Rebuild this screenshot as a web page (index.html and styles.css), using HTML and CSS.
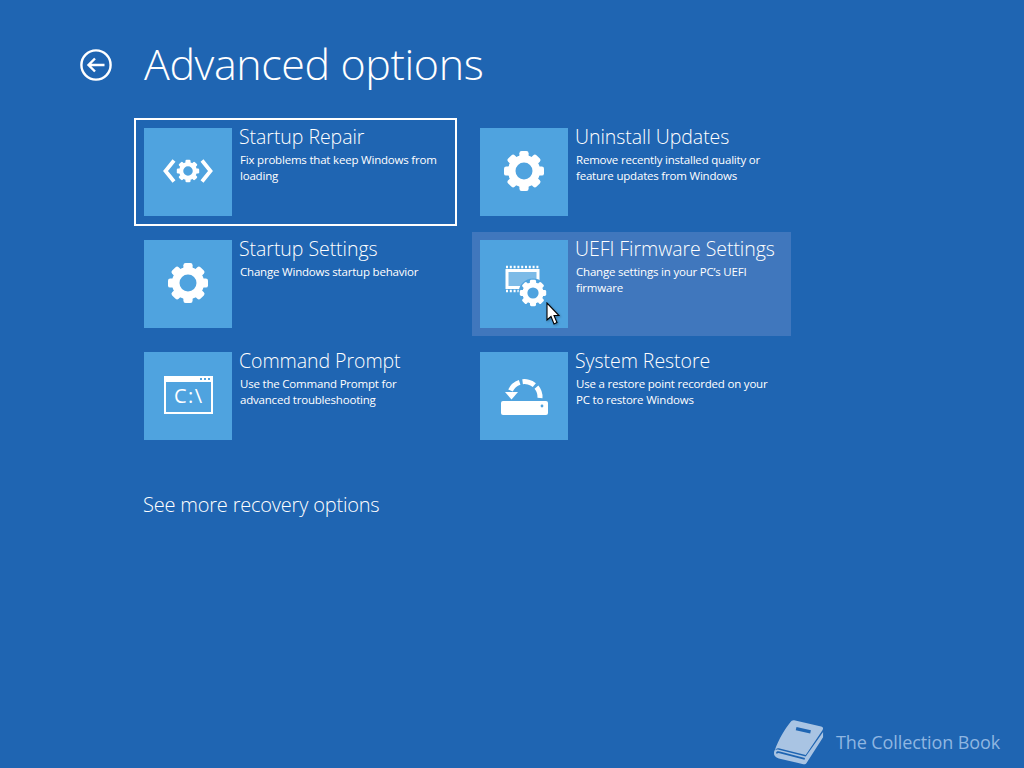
FILE: index.html
```html
<!DOCTYPE html>
<html lang="en">
<head>
<meta charset="utf-8">
<title>Advanced options</title>
<link rel="stylesheet" href="styles.css">
</head>
<body>
<svg class="defs" width="0" height="0" aria-hidden="true">
  <defs>
    <g id="gear">
      <circle r="12.300" fill="none" stroke="#fff" stroke-width="7.600"/>
      <g fill="#fff">
        <rect x="-4.600" y="-20" width="9.200" height="7" rx="2.200"/>
        <rect x="-4.600" y="-20" width="9.200" height="7" rx="2.200" transform="rotate(45)"/>
        <rect x="-4.600" y="-20" width="9.200" height="7" rx="2.200" transform="rotate(90)"/>
        <rect x="-4.600" y="-20" width="9.200" height="7" rx="2.200" transform="rotate(135)"/>
        <rect x="-4.600" y="-20" width="9.200" height="7" rx="2.200" transform="rotate(180)"/>
        <rect x="-4.600" y="-20" width="9.200" height="7" rx="2.200" transform="rotate(225)"/>
        <rect x="-4.600" y="-20" width="9.200" height="7" rx="2.200" transform="rotate(270)"/>
        <rect x="-4.600" y="-20" width="9.200" height="7" rx="2.200" transform="rotate(315)"/>
      </g>
    </g>
  </defs>
</svg>

<header class="header">
  <svg class="back" width="32" height="32" viewBox="0 0 32 32">
    <circle cx="16" cy="16" r="14.600" fill="none" stroke="#fff" stroke-width="2.400"/>
    <path d="M24.500 16H8.500M15 9.500L8.500 16L15 22.500" fill="none" stroke="#fff" stroke-width="2.400"/>
  </svg>
  <h1 class="title">Advanced options</h1>
</header>

<main class="options">
  <div class="option focused">
    <div class="tile">
      <svg width="88" height="88" viewBox="0 0 88 88">
        <use href="#gear" transform="translate(44 43) scale(.56)"/>
        <path d="M30 32.500L21.500 43L30 53.500M58 32.500L66.500 43L58 53.500" fill="none" stroke="#fff" stroke-width="3.800"/>
      </svg>
    </div>
    <div class="text">
      <div class="name">Startup Repair</div>
      <div class="desc">Fix problems that keep Windows from loading</div>
    </div>
  </div>
  <div class="option">
    <div class="tile">
      <svg width="88" height="88" viewBox="0 0 88 88"><use href="#gear" transform="translate(44 43)"/></svg>
    </div>
    <div class="text">
      <div class="name">Uninstall Updates</div>
      <div class="desc">Remove recently installed quality or feature updates from Windows</div>
    </div>
  </div>
  <div class="option">
    <div class="tile">
      <svg width="88" height="88" viewBox="0 0 88 88"><use href="#gear" transform="translate(44 43)"/></svg>
    </div>
    <div class="text">
      <div class="name">Startup Settings</div>
      <div class="desc">Change Windows startup behavior</div>
    </div>
  </div>
  <div class="option hovered">
    <div class="tile">
      <svg width="88" height="88" viewBox="0 0 88 88">
        <rect x="27" y="30.500" width="31" height="17" fill="#7dbbe7" stroke="#fff" stroke-width="3"/>
        <path d="M26 27H59M26 51H59" fill="none" stroke="#fff" stroke-width="2.400" stroke-dasharray="2 1.800"/>
        <circle cx="53" cy="53" r="14.500" fill="#4fa3df"/>
        <use href="#gear" transform="translate(53 53) scale(.66)"/>
      </svg>
    </div>
    <div class="text">
      <div class="name">UEFI Firmware Settings</div>
      <div class="desc">Change settings in your PC’s UEFI firmware</div>
    </div>
  </div>
  <div class="option">
    <div class="tile">
      <svg width="88" height="88" viewBox="0 0 88 88">
        <rect x="21" y="25" width="47" height="36" fill="none" stroke="#fff" stroke-width="2"/>
        <rect x="20" y="24" width="49" height="6" fill="#fff"/>
        <path d="M56 27H66" stroke="#4fa3df" stroke-width="2" stroke-dasharray="2 2"/>
        <text class="prompt" x="30" y="51">C:\</text>
      </svg>
    </div>
    <div class="text">
      <div class="name">Command Prompt</div>
      <div class="desc">Use the Command Prompt for advanced troubleshooting</div>
    </div>
  </div>
  <div class="option">
    <div class="tile">
      <svg width="88" height="88" viewBox="0 0 88 88">
        <rect x="21" y="49" width="47" height="14" rx="2" fill="#fff"/>
        <circle cx="62" cy="54" r="1.400" fill="#4fa3df"/>
        <path d="M30.500 38.500A15.500 15.500 0 0 1 60 46" fill="none" stroke="#fff" stroke-width="5" stroke-dasharray="12.500 3"/>
        <path d="M25 40H38L31.500 47.500Z" fill="#fff"/>
      </svg>
    </div>
    <div class="text">
      <div class="name">System Restore</div>
      <div class="desc">Use a restore point recorded on your PC to restore Windows</div>
    </div>
  </div>
</main>

<div class="more">See more recovery options</div>

<svg class="cursor" width="14" height="24" viewBox="0 0 14 24">
  <path d="M1 1V18L5 14.500L8 22L11 20.500L8 13.500H13Z" fill="#fff" stroke="#000" stroke-width="1.100"/>
</svg>

<div class="watermark">
  <svg width="52" height="47" viewBox="0 0 54 48">
    <path d="M22 1L50 7.500C52 8 52.500 9.500 51.500 11L34 37L6 30C4 29.500 3 30.500 1.500 33C6 20 13 9 18 3C19 1.500 20.500 .6 22 1Z" fill="#a9c4e3"/>
    <path d="M1 35C1 31.500 3.500 31 6 31.500L34 38.500L52 13V18.500L35 45C34 46.500 33 46.800 31.500 46.500L6 40.500C2.500 39.500 1 38 1 35Z" fill="#a9c4e3"/>
    <path d="M4 35.500C4 33.800 5 33.800 7 34.200L33 41" fill="none" stroke="#1f65b2" stroke-width="1.800"/>
    <path d="M24 9.500L39 13" fill="none" stroke="#1f65b2" stroke-width="3.400"/>
  </svg>
  <span class="mark-text">The Collection Book</span>
</div>
</body>
</html>
```

FILE: styles.css
```css
* { box-sizing: border-box; }

html, body {
  margin: 0;
  height: 100%;
}

body {
  position: relative;
  width: 1024px;
  height: 768px;
  overflow: hidden;
  background: #1f65b2;
  color: #fff;
  font-family: "Open Sans", "Liberation Sans", sans-serif;
}

.defs { position: absolute; }

.header {
  display: flex;
  align-items: center;
  gap: 32px;
  height: 64px;
  margin-top: 32px;
  padding-left: 80px;
}

.back { flex: none; margin-top: 1px; }

.title {
  margin: 0;
  font-size: 43px;
  font-weight: 300;
  line-height: 64px;
  letter-spacing: -0.4px;
}

.options {
  display: grid;
  grid-template-columns: 319px 319px;
  grid-auto-rows: 104px;
  gap: 8px 17px;
  margin: 24px 0 0 136px;
}

.option {
  display: flex;
  padding: 8px;
  gap: 7px;
}

.focused { outline: 2px solid #fff; }

.hovered { background: #4077bd; }

.tile {
  flex: none;
  width: 88px;
  height: 88px;
  background: #4fa3df;
}

.tile svg { display: block; }

.text { min-width: 0; }

.name {
  font-size: 19.500px;
  font-weight: 300;
  line-height: 26px;
  letter-spacing: -0.05px;
  margin-top: -4px;
  white-space: nowrap;
}

.desc {
  width: 205px;
  margin: 2px 0 0 1px;
  font-size: 11.500px;
  line-height: 16px;
  letter-spacing: -0.2px;
}

.prompt {
  fill: #fff;
  font-family: "Open Sans", sans-serif;
  font-size: 20px;
  letter-spacing: 1.500px;
}

.more {
  margin: 44px 0 0 143px;
  font-size: 20px;
  font-weight: 300;
  line-height: 26px;
  letter-spacing: -0.2px;
}

.cursor {
  position: absolute;
  left: 546px;
  top: 302px;
  filter: drop-shadow(1px 1px 1px rgba(0, 0, 0, .3));
}

.watermark {
  position: absolute;
  left: 773px;
  top: 719px;
  display: flex;
  align-items: center;
  gap: 11px;
}

.watermark svg { display: block; }

.mark-text {
  color: #8fb6e1;
  font-size: 18px;
  letter-spacing: -0.1px;
  margin-top: -2px;
}
```
